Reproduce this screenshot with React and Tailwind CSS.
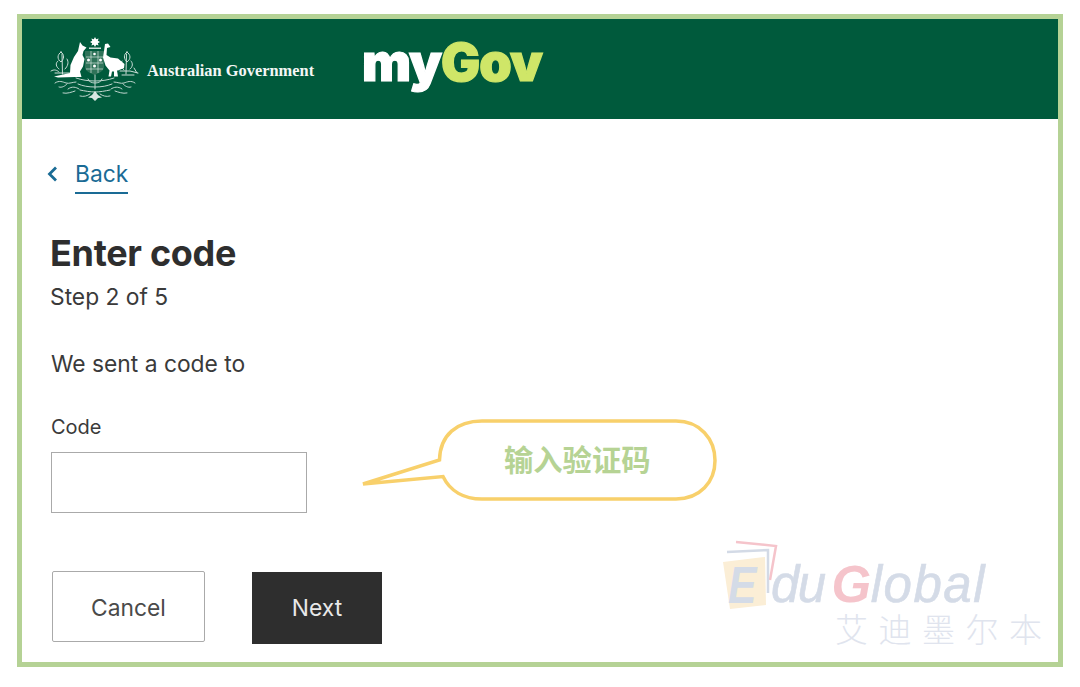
import React from "react";

function Emblem() {
  return (
    <svg width="90" height="66" viewBox="0 0 90 66" fill="none" className="shrink-0">
      {/* star and crest */}
      <path d="M45 0l1.2 2.2 2.4-.8-.8 2.4L50 5l-2.2 1.2.8 2.4-2.4-.8L45 10l-1.2-2.2-2.4.8.8-2.4L40 5l2.2-1.2-.8-2.4 2.4.8z" fill="#fff" />
      <rect x="39" y="10.5" width="12" height="1.5" fill="#fff" opacity=".8" />
      {/* shield */}
      <path d="M35 14h19v16c0 4-5 6-9.500 8-4.500-2-9.500-4-9.500-8z" fill="#2f7359" />
      <path d="M36 20h17M36 26h17M36 32h17M41 14v22M48 14v22" stroke="#cfe3da" strokeWidth="1" opacity=".7" />
      <circle cx="38.500" cy="23" r="1.500" fill="#fff" /><circle cx="44.500" cy="29" r="1.500" fill="#fff" /><circle cx="50.500" cy="23" r="1.500" fill="#fff" /><circle cx="44.500" cy="17" r="1.300" fill="#fff" />
      {/* kangaroo */}
      <path d="M30 5l2.500 3.500 4 2-3 3.500-1 4 2 4-1.500 7.500-3 5 1.500 5.500-6.500 0L8 40.500l-4-1 16-3.500 .5-8 3.500-8 4-6z" fill="#fff" />
      {/* emu */}
      <path d="M55 7l3-.5 2.500 3.500-3.500 1-.5 7 4 2.500 7.500 1 6.500 5.500-.5 4-6 2.500h-1l1 6h-4l0-5h-2l-1 5h-2.500l1-6-4-5-2.500-8 1-6.500z" fill="#fff" />
      {/* left plant */}
      <g stroke="#fff" strokeWidth="1" opacity=".8" strokeLinecap="round">
        <path d="M11 15c-4 3-4 7 0 10 3-3 4-7 0-10zM12 17l.5 20M8 24c-3 2-2 6 1 8M17 22c2 3 1 7-2 10" />
        <path d="M5 36h17M1 34c3-2 6-1 8 1" />
      </g>
      {/* right plant */}
      <g stroke="#fff" strokeWidth="1" opacity=".8" strokeLinecap="round">
        <path d="M77 15c4 3 4 7 0 10-3-3-4-7 0-10zM76.500 17l-.5 20M81 24c2 2 2 6-1 8M72 24c-2 3-1 6 2 9" />
        <path d="M70 34h10l8 2M84 31l3 5M72 38h12" />
      </g>
      {/* lower foliage */}
      <g stroke="#fff" strokeWidth="1" opacity=".75" strokeLinecap="round">
        <path d="M5 46c4-3 8-1 11 0s7-1 10-1M9 50c3 1 6-1 8-3M18 52c4-3 8-2 11 0M13 56c4 1 9-1 12-2" />
        <path d="M85 46c-4-3-8-1-11 0s-7-1-10-1M81 50c-3 1-6-1-8-3M72 52c-4-3-8-2-11 0M77 56c-4 1-9-1-12-2" />
        <path d="M26 41c6 2 12 3 19 3s13-1 19-3M28 47c5 2 10 3 17 3s12-1 17-3M30 59c4 1 7 0 10-2M60 59c-4 1-7 0-10-2M30 53c5 1 10 2 15 2s10-1 15-2" />
        <path d="M45 38v14M38 42c1 3 4 4 7 4 3 0 6-1 7-4" />
      </g>
      <path d="M45 54l3 4 4 2.500-4 .5-3 3-3-3-4-.5 4-2.500z" fill="#fff" opacity=".85" />
    </svg>
  );
}

function Watermark() {
  return (
    <div className="absolute left-[706px] top-[523px] w-[345px] h-[130px] [font-family:'Liberation_Sans',sans-serif]">
      <svg width="60" height="74" viewBox="0 0 60 74" fill="none" className="absolute left-[16px] top-[16px]">
        <path d="M1 23L43 18 44 66 8 70z" fill="#fbeed6" />
        <path d="M5 13L46 11V54" stroke="#d3dae6" strokeWidth="2.500" />
        <path d="M14 3L54 7 48 41" stroke="#f5c4cb" strokeWidth="2.500" />
      </svg>
      <div className="absolute left-[22px] top-[40px] origin-left scale-x-[0.82] text-[52px] leading-[44px] italic font-bold whitespace-nowrap text-[#d4dbe7]">E</div>
      <div className="absolute left-[65px] top-[40px] text-[51px] leading-[44px] italic whitespace-nowrap text-[#d4dbe7] [-webkit-text-stroke:0.600px_currentColor]">
        <span className="tracking-[-1.600px]">du</span>
        <span className="ml-[7px] font-bold text-[#f5c4cb] tracking-[-1.500px] [-webkit-text-stroke:0]">G</span>
        <span className="ml-[1px] tracking-[1.500px]">lobal</span>
      </div>
      <div className="absolute left-[129px] top-[87px] text-[33px] leading-[36px] whitespace-nowrap text-[#e0e4ee] tracking-[10.500px] font-extralight [font-family:'Noto_Sans_CJK_SC',sans-serif]">
        艾迪墨尔本
      </div>
    </div>
  );
}

function Callout() {
  return (
    <div className="absolute left-[358px] top-[417px] w-[362px] h-[86px]">
      <svg width="362" height="86" viewBox="0 0 362 86" fill="none" className="absolute inset-0">
        <path
          d="M5 67 L81.500 43 C82 18 99 4 124 4 H318 C342 4 357 22 357 43.500 C357 65 342 82 318 82 H124 C106 82 92 74 85 59.500 Z"
          fill="#fff"
          stroke="#f8d06b"
          strokeWidth="3.500"
          strokeLinejoin="miter"
        />
      </svg>
      <div className="absolute left-[146px] top-[23px] text-[29.300px] leading-[36px] font-bold whitespace-nowrap text-[#b6d394] [font-family:'Noto_Sans_CJK_SC',sans-serif]">
        输入验证码
      </div>
    </div>
  );
}

export default function App() {
  return (
    <div className="relative w-[1080px] h-[687px] bg-white pl-[17px] pt-[14px] overflow-hidden [font-family:Inter,sans-serif]">
      <div className="w-[1046px] h-[653px] border-[5px] border-[#b5d295] flex flex-col">
        <header className="h-[100px] bg-[#005a3c] flex items-start shrink-0 pl-[28px]">
          <div className="mt-[18px]"><Emblem /></div>
          <span className="mt-[42px] ml-[7px] w-[215px] text-[16.400px] leading-[20px] font-bold text-[#f4f7f5] whitespace-nowrap [font-family:'Liberation_Serif',serif]">
            Australian Government
          </span>
          <span className="mt-[12px] text-[52px] leading-[64px] font-black tracking-[-1px] text-white whitespace-nowrap [-webkit-text-stroke:1.200px_currentColor] [font-family:Inter,sans-serif]">
            my<span className="text-[#cfe668]">Gov</span>
          </span>
        </header>
        <main className="flex flex-col items-start pl-[29px] text-[#3a3a3a]">
          <a className="mt-[40px] flex items-start gap-[16px] text-[#1a6b95]">
            <svg width="14" height="20" viewBox="0 0 14 20" fill="none" className="mt-[5px] -ml-[6px]">
              <path d="M11 3.500L4.500 10l6.500 6.500" stroke="#1a6b95" strokeWidth="2.800" />
            </svg>
            <span className="text-[22.800px] leading-[30px] pb-[3px] border-b-2 border-[#1a6b95]">Back</span>
          </a>
          <h1 className="mt-[37px] text-[36px] leading-[44px] font-bold text-[#2e2e2e] -ml-[1px] tracking-[-0.300px]">Enter code</h1>
          <p className="mt-[7px] text-[22.800px] leading-[30px] -ml-[1px]">Step 2 of 5</p>
          <p className="mt-[37px] text-[22.800px] leading-[30px]">We sent a code to</p>
          <label className="mt-[34px] text-[20px] leading-[28px]">Code</label>
          <div className="mt-[11px] w-[256px] h-[61px] border-[1.500px] border-[#aaaaaa]" />
          <div className="mt-[58px] flex gap-[47px] items-start">
            <button className="ml-[1px] w-[153px] h-[71px] pt-[4px] border-[1.500px] border-[#aaaaaa] rounded-[2px] text-[22.800px] text-[#4a4a4a]">Cancel</button>
            <button className="mt-[1px] w-[130px] h-[72px] bg-[#2e2e2e] text-[22.800px] text-[#e8e8e8]">Next</button>
          </div>
        </main>
      </div>
      <Callout />
      <Watermark />
    </div>
  );
}
